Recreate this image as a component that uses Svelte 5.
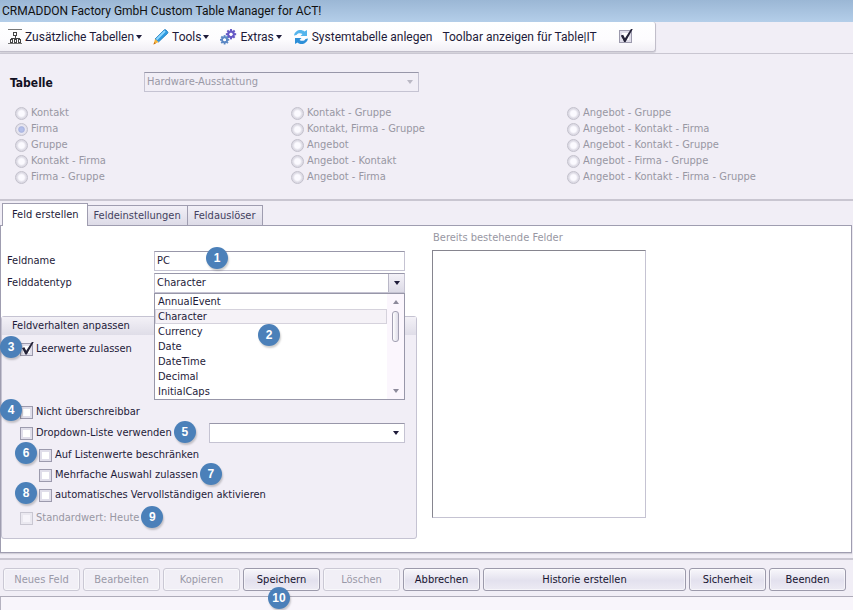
<script>
  const radioColumns = [
    ['Kontakt', 'Firma', 'Gruppe', 'Kontakt - Firma', 'Firma - Gruppe'],
    ['Kontakt - Gruppe', 'Kontakt, Firma - Gruppe', 'Angebot', 'Angebot - Kontakt', 'Angebot - Firma'],
    ['Angebot - Gruppe', 'Angebot - Kontakt - Firma', 'Angebot - Kontakt - Gruppe', 'Angebot - Firma - Gruppe', 'Angebot - Kontakt - Firma - Gruppe']
  ];
  const types = ['AnnualEvent', 'Character', 'Currency', 'Date', 'DateTime', 'Decimal', 'InitialCaps'];
  const tabs = ['Feld erstellen', 'Feldeinstellungen', 'Feldauslöser'];
  const actions = [
    { text: 'Neues Feld', disabled: true },
    { text: 'Bearbeiten', disabled: true },
    { text: 'Kopieren', disabled: true },
    { text: 'Speichern', step: 10 },
    { text: 'Löschen', disabled: true },
    { text: 'Abbrechen' },
    { text: 'Historie erstellen', wide: true },
    { text: 'Sicherheit' },
    { text: 'Beenden' }
  ];
  let activeTab = $state(0);
  let fieldName = $state('PC');
  let fieldType = $state('Character');
  const teeth = [0, 45, 90, 135, 180, 225, 270, 315];
</script>

{#snippet badge(n, side)}
  <span class="badge {side}">{n}</span>
{/snippet}

{#snippet gear(x, y, color, s)}
  <g transform="translate({x} {y}) scale({s})" fill={color}>
    {#each teeth as a}<rect x="-1.2" y="-6" width="2.4" height="4" transform="rotate({a})" />{/each}
    <circle r="3.2" fill="none" stroke={color} stroke-width="2.4" />
    <circle r="1.8" fill="#fff" />
  </g>
{/snippet}

<div class="app">
  <header>CRMADDON Factory GmbH Custom Table Manager for ACT!</header>

  <div class="toolbar-row">
    <nav class="toolbar">
      <button class="tool">
        <svg width="14" height="16" viewBox="0 0 14 16" fill="none" stroke="#444" shape-rendering="crispEdges">
          <path d="M0 .5H14M0 14.5H14" stroke="#777" />
          <path d="M5.500 3.500h3v3h-3zM7.500 7v2M3.500 11V9.500h8V11M2.500 10.500h2v3h-2zM6.500 10.500h2v3h-2zM10.500 10.500h2v3h-2z" />
        </svg>
        <span>Zusätzliche Tabellen</span><i class="caret"></i>
      </button>
      <button class="tool">
        <svg width="16" height="16" viewBox="0 0 16 16">
          <path d="M2 10 11 1q1-1 2 0l1.500 1.500q1 1 0 2L5.500 13z" fill="#2f9be0" stroke="#1674b8" stroke-width=".7" />
          <path d="M3.500 10.500 12 2" stroke="#91d8ff" stroke-width="1.800" />
          <path d="m2 10 3.500 3L.5 15.500z" fill="#f5b53d" /><path d="m1.300 13 1.500 1.500-2.300 1z" fill="#c56b16" />
        </svg>
        <span>Tools</span><i class="caret"></i>
      </button>
      <button class="tool">
        <svg width="17" height="16" viewBox="0 0 17 16">
          {@render gear(11, 5.2, '#6558c5', 0.86)}
          {@render gear(4.6, 10.8, '#5b88c4', 0.78)}
        </svg>
        <span>Extras</span><i class="caret"></i>
      </button>
      <button class="tool">
        <svg width="16" height="16" viewBox="0 0 16 16">
          <path d="M1 6.500C2 1 8-.5 11.500 2.500L14 1v6H7.500L9.500 5C7 3.500 4.500 4 3.500 6z" fill="#55b4ec" />
          <path d="M15 9.500C14 15 8 16.500 4.500 13.500L2 15V9h6.500l-2 2C9 12.500 11.500 12 12.500 10z" fill="#2d8fd8" />
        </svg>
        <span>Systemtabelle anlegen</span>
      </button>
      <label class="toolbar-check" for="toolbar-on">Toolbar anzeigen für Table|IT</label>
      <input type="checkbox" id="toolbar-on" checked />
    </nav>
  </div>

  <section class="table-choice">
    <div class="table-row">
      <label for="table">Tabelle</label>
      <div class="combo disabled">
        <select id="table" disabled><option>Hardware-Ausstattung</option></select>
        <i class="caret"></i>
      </div>
    </div>
    <div class="radios">
      {#each radioColumns as column}
        <div>
          {#each column as name}
            <label><input type="radio" name="scope" disabled checked={name === 'Firma'} />{name}</label>
          {/each}
        </div>
      {/each}
    </div>
  </section>

  <main>
    <div class="tabs" role="tablist">
      {#each tabs as tab, i}
        <button role="tab" aria-selected={activeTab === i} class:active={activeTab === i} onclick={() => (activeTab = i)}>{tab}</button>
      {/each}
    </div>

    <div class="panel">
      <div class="editor">
        <div class="field">
          <label for="name">Feldname</label>
          <div class="control"><input type="text" id="name" bind:value={fieldName} />{@render badge(1, 'in-text')}</div>
        </div>
        <div class="field">
          <label for="type">Felddatentyp</label>
          <div class="control combo open">
            <select id="type" bind:value={fieldType}>
              {#each types as t}<option>{t}</option>{/each}
            </select>
            <span class="drop"><i class="caret"></i></span>
            <div class="popup">
              <div class="list" role="listbox" aria-label="Felddatentyp">
                {#each types as t}
                  <button role="option" aria-selected={t === fieldType} onclick={() => (fieldType = t)}>{t}</button>
                {/each}
              </div>
              <div class="scroll"><i class="up"></i><i class="thumb"></i><i class="caret"></i></div>
              {@render badge(2, 'in-list')}
            </div>
          </div>
        </div>

        <fieldset>
          <legend>Feldverhalten anpassen</legend>
          <div class="row first">{@render badge(3, 'before')}<label><input type="checkbox" checked />Leerwerte zulassen</label></div>
          <div class="row">{@render badge(4, 'before')}<label><input type="checkbox" />Nicht überschreibbar</label></div>
          <div class="row">
            <label><input type="checkbox" />Dropdown-Liste verwenden</label>{@render badge(5, 'after')}
            <div class="combo source">
              <select aria-label="Dropdown-Liste"><option></option></select>
              <i class="caret"></i>
            </div>
          </div>
          <div class="sub">
            <div class="row">{@render badge(6, 'before')}<label><input type="checkbox" />Auf Listenwerte beschränken</label></div>
            <div class="row"><label><input type="checkbox" />Mehrfache Auswahl zulassen</label>{@render badge(7, 'after')}</div>
            <div class="row">{@render badge(8, 'before')}<label><input type="checkbox" />automatisches Vervollständigen aktivieren</label></div>
          </div>
          <div class="row"><label class="off"><input type="checkbox" disabled />Standardwert: Heute</label>{@render badge(9, 'after')}</div>
        </fieldset>
      </div>

      <div class="existing">
        <span id="existing-title">Bereits bestehende Felder</span>
        <div class="box" role="listbox" aria-labelledby="existing-title" tabindex="0"></div>
      </div>
    </div>
  </main>

  <div class="actions">
    {#each actions as a}
      <div class="slot" class:wide={a.wide}>
        <button disabled={a.disabled}>{a.text}</button>
        {#if a.step}{@render badge(a.step, 'below')}{/if}
      </div>
    {/each}
  </div>
  <footer></footer>
</div>

<style>
  :global(body) { margin: 0; background: #f1eef6; }
  .app { min-height: 100vh; display: flex; flex-direction: column; font: 11px/16px "DejaVu Sans Condensed", "Noto Sans", sans-serif; color: #1e1b39; }
  .app, .app * { box-sizing: border-box; }
  button, input, select { font: inherit; color: inherit; margin: 0; }
  label { white-space: nowrap; }

  header { height: 22px; padding-left: 2px; font: 12px/22px Roboto, sans-serif; color: #111; background: linear-gradient(#9bb7d5, #b4cee9); }
  .toolbar-row { height: 32px; border-bottom: 1px solid #c9c6d1; }
  .toolbar { display: flex; align-items: center; width: max-content; height: 30px; padding: 0 23px 0 3px; font: 12px/16px Roboto, sans-serif; background: linear-gradient(#fff, #fdfcfe 60%, #f1eff5); border: solid #c1beca; border-width: 0 1px 1px 0; border-radius: 0 3px 3px 0; box-shadow: 0 1px 1px #d2d0d9; }
  .tool { display: flex; align-items: center; gap: 3px; padding: 0 6px 0 5px; border: 0; background: none; white-space: nowrap; }
  .toolbar-check { padding: 0 22px 0 4px; }

  .caret { flex: none; width: 0; height: 0; border: 3px solid transparent; border-top: 4px solid #1e1b39; border-bottom: 0; }
  .toolbar .caret { margin-left: -1px; }

  .table-choice { height: 147px; padding: 18px 10px 0; border-bottom: 2px solid #c9c6d1; }
  .table-row { display: flex; align-items: center; height: 20px; }
  .table-row label { width: 134px; padding-top: 2px; font: bold 12px/16px "DejaVu Sans Condensed", sans-serif; color: #111022; }
  .combo { position: relative; display: flex; height: 20px; background: #fff; border: 1px solid #c5c3d2; border-top-color: #9897a9; }
  .combo select { flex: 1; min-width: 0; padding: 0 18px 0 2px; border: 0; background: none; appearance: none; opacity: 1; outline: 0; }
  .combo > .caret { position: absolute; right: 5px; top: 7px; pointer-events: none; }
  .disabled { width: 275px; color: #9a99a6; background: none; }
  .disabled > .caret { border-top-color: #bab8c4; }

  .radios { display: grid; grid-template-columns: repeat(3, 1fr); margin-top: 13px; padding-left: 5px; color: #9897a3; }
  .radios label { display: flex; align-items: center; gap: 3px; height: 16px; }
  input[type='radio'] { appearance: none; width: 13px; height: 13px; border: 1px solid #c3c1cc; border-radius: 50%; background: radial-gradient(#fbfaff 35%, #dddbe5 60%); }
  input[type='radio']:checked { background: radial-gradient(#b4bfe9 20%, #a8b3df 35%, #eceaf3 50%, #e1dfea 60%); }

  main { padding: 2px 1px 0 0; }
  .tabs { display: flex; align-items: flex-end; height: 22px; padding-left: 2px; }
  .tabs button { height: 20px; padding: 1px 6px 0; border: 1px solid #9f9db0; border-left-width: 0; border-bottom: 0; background: linear-gradient(#f2f0f7, #dddbe7); color: #444260; white-space: nowrap; }
  .tabs button.active { position: relative; height: 23px; margin-bottom: -1px; padding: 0 8px 0 9px; border-left-width: 1px; background: #fff; color: #1e1b39; }
  .panel { display: flex; gap: 15px; padding: 25px 0 13px; border: 1px solid #9f9db0; background: #fff; box-shadow: 0 1px 1px #d2d0d9; }
  .editor { flex: none; width: 416px; }
  .field { display: flex; align-items: center; height: 20px; margin: 0 12px 2px 6px; }
  .field > label { width: 147px; }
  .control { position: relative; flex: 1; display: flex; height: 20px; }
  input[type='text'] { flex: 1; min-width: 0; padding: 0 2px; border: 1px solid #c5c3d2; border-top-color: #9897a9; background: #fff; outline: 0; }
  .drop { position: absolute; right: 0; top: 0; display: flex; align-items: center; justify-content: center; width: 16px; height: 18px; border-left: 1px solid #b9b7c7; background: linear-gradient(#f4f2f8, #dcdae6); pointer-events: none; }
  .popup { position: absolute; z-index: 2; top: 19px; left: -1px; right: -1px; display: flex; border: 1px solid #9897a9; background: #fff; }
  .list { flex: 1; display: flex; flex-direction: column; }
  .list button { height: 15px; padding: 0 2px; border: 1px solid transparent; background: none; text-align: left; line-height: 13px; }
  .list button[aria-selected='true'] { background: #f5f2f7; border-color: #d5d2dc; }
  .scroll { display: flex; flex-direction: column; align-items: center; width: 17px; padding: 6px 0; background: #fbf6fd; }
  .scroll .caret { border-top-color: #8c8a9b; margin-top: auto; }
  .up { border: 3px solid transparent; border-bottom: 4px solid #8c8a9b; border-top: 0; }
  .thumb { width: 7px; height: 31px; margin-top: 7px; border: 1px solid #a3a1b3; border-radius: 3px; background: linear-gradient(90deg, #fff, #dedce8); }

  fieldset { min-width: 0; margin: 23px 0 0; padding: 0 0 10px; border: 1px solid #c5c3d2; border-radius: 3px; background: #f1eef6; }
  legend { float: left; width: 100%; height: 18px; margin-bottom: 4px; padding: 0 10px; line-height: 18px; background: linear-gradient(#f3f1f7, #dfdde8); }
  .row { clear: both; position: relative; display: flex; align-items: center; width: max-content; height: 20px; margin: 0 0 1px 18px; }
  .row label { display: flex; align-items: center; gap: 3px; }
  .row.first { margin-bottom: 43px; }
  .sub { margin: 2px 0 3px 19px; }
  .sub .row { margin-bottom: 0; }
  .row:last-child { margin-bottom: 0; }
  .off { color: #9897a3; }
  .source { position: absolute; left: 189px; width: 196px; }
  input[type='checkbox'] { appearance: none; flex: none; width: 13px; height: 13px; border: 1px solid #9c9aad; background: #fff; box-shadow: inset 0 0 0 2px #e0deea; }
  input[type='checkbox']:disabled { border-color: #c9c7d2; background: #f6f4fa; box-shadow: inset 0 0 0 2px #eae8f0; }
  input[type='checkbox']:checked { position: relative; }
  input[type='checkbox']:checked::after { content: ''; position: absolute; left: 1px; top: -2px; width: 12px; height: 13px; background: #252338; clip-path: polygon(0 50%, 20% 45%, 35% 72%, 85% 0, 100% 0, 40% 100%, 28% 100%); }

  .existing { flex: 0 1 214px; display: flex; flex-direction: column; margin-top: -21px; color: #9897a3; }
  .existing span { padding-left: 1px; white-space: nowrap; }
  .box { height: 268px; margin-top: 4px; border: 1px solid #c5c3d2; border-top-color: #86858f; border-left-color: #86858f; background: #fff; }

  .actions { display: flex; gap: 3px; height: 39px; margin-top: 5px; padding: 8px 7px 0 3px; border-top: 2px solid #c9c6d1; border-bottom: 1px solid #aeabb9; }
  .slot { position: relative; flex: none; width: 77px; height: 23px; }
  .slot.wide { flex: 1; }
  .slot button { width: 100%; height: 23px; padding: 0; border: 1px solid #9c9aab; border-radius: 3px; background: linear-gradient(#f8f7fb, #e3e1ee 55%, #edebf4); box-shadow: inset 0 0 0 1px #fff8; color: #16132f; white-space: nowrap; }
  .slot button:disabled { border-color: #cac8d4; background: #f1eff6; color: #9a99a8; }
  footer { flex: 1; min-height: 13px; border-left: 1px solid #b5b2c0; background: #f8f5fb; }

  .badge { position: absolute; z-index: 3; width: 22px; height: 22px; border-radius: 50%; background: #4b80b9; box-shadow: 1px 2px 2px #0003; color: #fff; font: bold 12px/22px "Liberation Sans", sans-serif; text-align: center; pointer-events: none; }
  .before { right: 100%; margin-right: -2px; top: -3px; }
  .sub .before { margin-right: 2px; }
  .after { left: 100%; margin-left: 2px; top: -2px; }
  .in-text { left: 52px; top: -4px; }
  .in-list { left: 103px; top: 30px; }
  .below { left: 25px; top: 19px; }
</style>
